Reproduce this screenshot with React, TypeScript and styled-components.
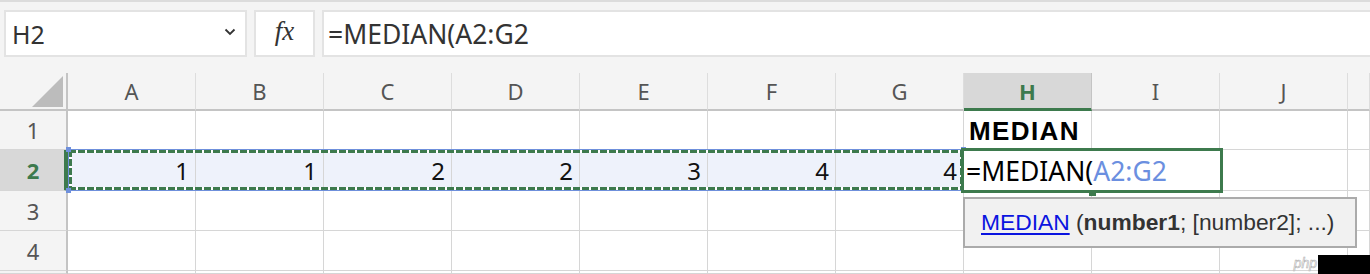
import React from "react";
import styled, { createGlobalStyle } from "styled-components";

const GREEN = "#3d7a4d";
const BLUE = "#6f90dc";
const COLS = ["A", "B", "C", "D", "E", "F", "G", "H", "I", "J", ""];
const ROW2 = [1, 1, 2, 2, 3, 4, 4];

const GlobalStyle = createGlobalStyle`
  html, body {
    margin: 0;
    padding: 0;
    background: #ffffff;
    overflow: hidden;
  }
  * {
    box-sizing: border-box;
  }
`;

export default function App() {
  return (
    <Page>
      <GlobalStyle />
      <Toolbar>
        <NameBox>
          <span>H2</span>
          <svg width="12" height="8" viewBox="0 0 12 8">
            <path d="M1.5 1.5 L6 6 L10.5 1.5" fill="none" stroke="#333" strokeWidth="1.8" />
          </svg>
        </NameBox>
        <FxBox>fx</FxBox>
        <FormulaBox>=MEDIAN(A2:G2</FormulaBox>
      </Toolbar>

      <Sheet>
        <Corner>
          <svg width="31" height="31" viewBox="0 0 31 31">
            <polygon points="31,0 31,31 0,31" fill="#bcbcbc" />
          </svg>
        </Corner>
        {COLS.map((c, i) => (
          <ColHeader key={"h" + i} $col={i + 2} $active={c === "H"}>
            {c}
          </ColHeader>
        ))}

        {[1, 2, 3, 4, 5].map((r) => (
          <React.Fragment key={"r" + r}>
            <RowHeader $row={r + 1} $active={r === 2}>
              {r < 5 ? r : ""}
            </RowHeader>
            {COLS.map((c, i) => (
              <Cell key={c + i + r} $row={r + 1} $col={i + 2} $selected={r === 2 && i < 7}>
                {r === 2 && i < 7 ? ROW2[i] : null}
                {r === 1 && c === "H" ? <Title>MEDIAN</Title> : null}
              </Cell>
            ))}
          </React.Fragment>
        ))}

        <Range>
          <Handle style={{ left: -3, top: -3 }} />
          <Handle style={{ right: -3, top: -3 }} />
          <Handle style={{ left: -3, bottom: -3 }} />
          <Handle style={{ right: -3, bottom: -3 }} />
        </Range>

        <Editor>
          <span>=MEDIAN(</span>
          <RefText>A2:G2</RefText>
          <FillHandle />
          <Tip>
            <TipLink>MEDIAN</TipLink>&nbsp;(<b>number1</b>; [number2]; ...)
          </Tip>
        </Editor>
      </Sheet>

      <Watermark>
        <span>php</span>
        <i />
      </Watermark>
    </Page>
  );
}

const Page = styled.div`
  position: relative;
  width: 1370px;
  height: 274px;
  overflow: hidden;
  background: #fff;
  font-family: "Noto Sans", "Liberation Sans", sans-serif;
`;

const Toolbar = styled.div`
  display: flex;
  gap: 7px;
  height: 73px;
  padding: 8px 0 0 4px;
  background: #f4f4f4;
  border-top: 2px solid #dcdcdc;
`;

const Box = styled.div`
  height: 47px;
  background: #fff;
  border: 2px solid #e3e3e3;
  display: flex;
  align-items: center;
  color: #333;
`;

const NameBox = styled(Box)`
  width: 243px;
  justify-content: space-between;
  padding: 0 9px 0 6px;
  font-size: 25px;

  svg {
    margin-top: -4px;
  }
`;

const FxBox = styled(Box)`
  width: 61px;
  justify-content: center;
  font-family: "Liberation Serif", "DejaVu Serif", serif;
  font-style: italic;
  font-size: 27px;
  padding-bottom: 4px;
`;

const FormulaBox = styled(Box)`
  flex: 1;
  margin-right: -10px;
  padding-left: 4px;
  font-size: 26.5px;
`;

const Sheet = styled.div`
  display: grid;
  grid-template-columns: 68px repeat(10, 128px) 1fr;
  grid-template-rows: 38px 39px 41px 40px 40px 1fr;
  height: 201px;
  background: #fff;
`;

const Corner = styled.div`
  grid-row: 1;
  grid-column: 1;
  background: #f4f4f4;
  border-right: 2px solid #c4c4c4;
  border-bottom: 2px solid #c4c4c4;
  display: flex;
  justify-content: flex-end;
  align-items: flex-end;
  padding: 0 3px 2px 0;
`;

const ColHeader = styled.div<{ $col: number; $active?: boolean }>`
  grid-row: 1;
  grid-column: ${(p) => p.$col};
  display: flex;
  align-items: center;
  justify-content: center;
  background: ${(p) => (p.$active ? "#d8d8d8" : "#f4f4f4")};
  border-right: 1px solid ${(p) => (p.$active ? "#c4c4c4" : "#dddddd")};
  border-bottom: ${(p) => (p.$active ? `3px solid ${GREEN}` : "2px solid #c4c4c4")};
  color: ${(p) => (p.$active ? GREEN : "#555")};
  font-weight: ${(p) => (p.$active ? 700 : 400)};
  font-size: 22px;
  padding-top: ${(p) => (p.$active ? "1px" : "0")};
`;

const RowHeader = styled.div<{ $row: number; $active?: boolean }>`
  grid-row: ${(p) => p.$row};
  grid-column: 1;
  display: flex;
  align-items: center;
  justify-content: center;
  background: ${(p) => (p.$active ? "#d8d8d8" : "#f4f4f4")};
  border-right: ${(p) => (p.$active ? `4px solid ${GREEN}` : "2px solid #c4c4c4")};
  border-bottom: 1px solid #d6d6d6;
  color: ${(p) => (p.$active ? GREEN : "#555")};
  font-weight: ${(p) => (p.$active ? 700 : 400)};
  font-size: 22px;
  padding-left: ${(p) => (p.$active ? "2px" : "0")};
`;

const Cell = styled.div<{ $row: number; $col: number; $selected?: boolean }>`
  grid-row: ${(p) => p.$row};
  grid-column: ${(p) => p.$col};
  display: flex;
  align-items: center;
  justify-content: flex-end;
  padding: 0 6px 0 5px;
  background: ${(p) => (p.$selected ? "#eef2fb" : "#fff")};
  border-right: 1px solid #d6d6d6;
  border-bottom: 1px solid #d6d6d6;
  color: #111;
  font-size: 24px;
  white-space: nowrap;
`;

const Title = styled.span`
  flex: 1;
  font-family: "Liberation Sans", Arial, sans-serif;
  font-weight: 700;
  font-size: 26px;
  letter-spacing: 1.4px;
  color: #000;
  padding-top: 3px;
`;

const dash = (dir: string) =>
  `repeating-linear-gradient(${dir}, ${GREEN} 0 7px, #fff 7px 9px)`;

const Range = styled.div`
  grid-row: 3;
  grid-column: 2 / 9;
  position: relative;
  z-index: 1;
  margin: -1px 0 0 0;
  border: 1px solid ${BLUE};
  background-image: ${dash("90deg")}, ${dash("90deg")}, ${dash("180deg")}, ${dash("180deg")};
  background-size: 100% 3px, 100% 3px, 3px 100%, 3px 100%;
  background-position: top left, bottom left, top left, top right;
  background-repeat: no-repeat;
  pointer-events: none;
`;

const Handle = styled.span`
  position: absolute;
  width: 5px;
  height: 5px;
  background: ${BLUE};
`;

const Editor = styled.div`
  grid-row: 3;
  grid-column: 9 / 11;
  position: relative;
  z-index: 2;
  margin: -2px -3px -2px -3px;
  border: 3px solid ${GREEN};
  background: #fff;
  display: flex;
  align-items: center;
  padding-left: 2px;
  font-size: 26.5px;
  color: #000;
  white-space: nowrap;
`;

const RefText = styled.span`
  color: #6b8fe0;
`;

const FillHandle = styled.span`
  position: absolute;
  left: 125px;
  top: calc(100% + 1px);
  width: 7px;
  height: 5px;
  background: ${GREEN};
`;

const Tip = styled.div`
  position: absolute;
  left: -1px;
  top: calc(100% + 7px);
  width: 394px;
  height: 51px;
  display: flex;
  align-items: center;
  padding-left: 16px;
  background: #f1f1f1;
  border: 2px solid #ababab;
  font-family: "Liberation Sans", Arial, sans-serif;
  font-size: 22.8px;
  color: #333;

  b {
    font-weight: 700;
  }
`;

const TipLink = styled.span`
  color: #0a14e0;
  text-decoration: underline;
  text-underline-offset: 3px;
`;

const Watermark = styled.div`
  position: absolute;
  right: 0;
  bottom: 0;
  display: flex;
  align-items: flex-end;
  gap: 1px;

  span {
    font-family: "Liberation Sans", Arial, sans-serif;
    font-size: 14px;
    font-style: italic;
    color: #fff;
    -webkit-text-stroke: 0.6px #b0b0b0;
    padding-bottom: 3px;
  }

  i {
    display: block;
    width: 52px;
    height: 19px;
    background: #000;
  }
`;
